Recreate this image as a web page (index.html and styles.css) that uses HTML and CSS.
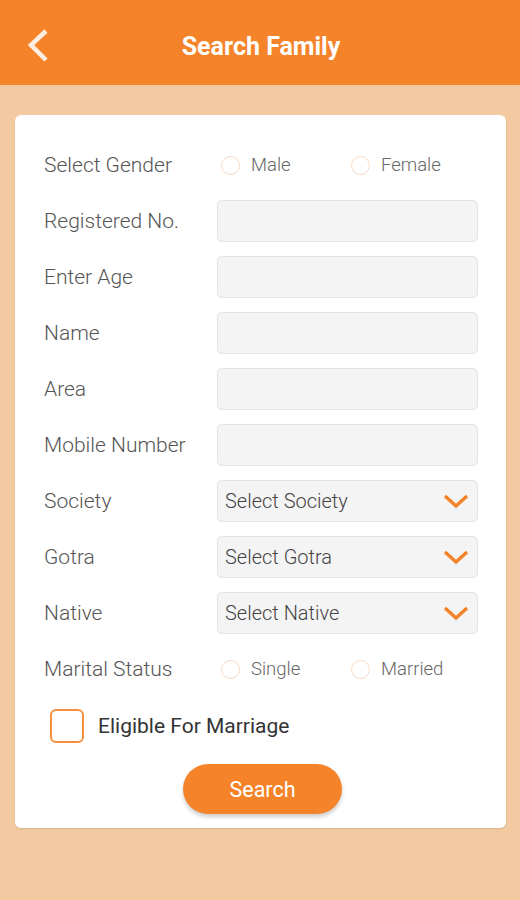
FILE: index.html
```html
<!DOCTYPE html>
<html lang="en">
<head>
    <meta charset="UTF-8">
    <meta name="viewport" content="width=device-width, initial-scale=1.0">
    <title>Search Family</title>
    <link rel="stylesheet" href="styles.css">
</head>

<body>
    <header class="topbar">
        <!-- Back button and title -->
        <span class="back">
            <svg width="24" height="36" viewBox="0 0 24 36">
                <polyline points="20,3 5,17 20,32" fill="none" stroke="#fdeee2" stroke-width="4.5"/>
            </svg>
        </span>
        <h1>Search Family</h1>
    </header>

    <main class="page">
        <form class="card">
            <div class="row">
                <label>Select Gender</label>
                <div class="radios">
                    <span class="radio"><i></i>Male</span>
                    <span class="radio"><i></i>Female</span>
                </div>
            </div>
            <div class="row">
                <label>Registered No.</label>
                <input type="text" class="field">
            </div>
            <div class="row">
                <label>Enter Age</label>
                <input type="text" class="field">
            </div>
            <div class="row">
                <label>Name</label>
                <input type="text" class="field">
            </div>
            <div class="row">
                <label>Area</label>
                <input type="text" class="field">
            </div>
            <div class="row">
                <label>Mobile Number</label>
                <input type="text" class="field">
            </div>
            <div class="row">
                <label>Society</label>
                <div class="field select">Select Society
                    <svg width="28" height="16" viewBox="0 0 28 16"><polyline points="3,3 14,13 25,3" fill="none" stroke="#f5832a" stroke-width="3.5"/></svg>
                </div>
            </div>
            <div class="row">
                <label>Gotra</label>
                <div class="field select">Select Gotra
                    <svg width="28" height="16" viewBox="0 0 28 16"><polyline points="3,3 14,13 25,3" fill="none" stroke="#f5832a" stroke-width="3.5"/></svg>
                </div>
            </div>
            <div class="row">
                <label>Native</label>
                <div class="field select">Select Native
                    <svg width="28" height="16" viewBox="0 0 28 16"><polyline points="3,3 14,13 25,3" fill="none" stroke="#f5832a" stroke-width="3.5"/></svg>
                </div>
            </div>
            <div class="row">
                <label>Marital Status</label>
                <div class="radios">
                    <span class="radio"><i></i>Single</span>
                    <span class="radio"><i></i>Married</span>
                </div>
            </div>

            <div class="check">
                <span class="box"></span>
                Eligible For Marriage
            </div>

            <div class="actions">
                <button type="button" class="btn">Search</button>
            </div>
        </form>
    </main>
</body>
</html>
```

FILE: styles.css
```css
body {
    margin: 0;
    padding: 0;
    background-color: #f2c9a0;
    font-family: Roboto, "Liberation Sans", sans-serif;
    height: 900px;
}

.topbar {
    background-color: #f5832a;
    height: 85px;
    display: flex;
    align-items: center;
    justify-content: center;
    position: relative;
}

.back {
    position: absolute;
    left: 26px;
    top: 28px;
}

.topbar h1 {
    margin: 0;
    color: #fff;
    font-size: 25px;
    font-weight: 700;
    margin-top: 8px;
    margin-left: 2px;
}

.page {
    padding: 30px 14px 0 15px;
}

.card {
    background-color: #fff;
    border-radius: 6px;
    padding: 29px 28px 14px 29px;
    box-shadow: 0 1px 2px rgba(0, 0, 0, 0.12);
}

.row {
    display: grid;
    grid-template-columns: 173px 261px;
    align-items: center;
    height: 42px;
    margin-bottom: 14px;
}

.row label {
    color: #555;
    font-size: 21px;
    font-weight: 300;
}

.field {
    box-sizing: border-box;
    height: 42px;
    width: 261px;
    border: 1px solid #e2e2e2;
    border-radius: 5px;
    background-color: #f4f4f4;
    margin: 0;
    font-family: inherit;
}

.select {
    display: flex;
    align-items: center;
    justify-content: space-between;
    padding: 0 7px 0 7px;
    color: #444;
    font-size: 20px;
    font-weight: 300;
}

.radios {
    display: flex;
    align-items: center;
}

.radio {
    display: flex;
    align-items: center;
    width: 130px;
    color: #666;
    font-size: 18.5px;
    font-weight: 300;
}

.radio i {
    display: inline-block;
    width: 17px;
    height: 17px;
    border: 1px solid #fbd9c2;
    border-radius: 50%;
    margin-left: 4px;
    margin-right: 11px;
}

.check {
    display: flex;
    align-items: center;
    color: #333;
    font-size: 21px;
    margin: 19px 0 0 6px;
    height: 34px;
}

.box {
    box-sizing: border-box;
    width: 34px;
    height: 34px;
    border: 2px solid #f5903f;
    border-radius: 6px;
    margin-right: 14px;
}

.actions {
    display: flex;
    justify-content: center;
    margin-top: 21px;
}

.btn {
    width: 159px;
    height: 50px;
    border: none;
    border-radius: 25px;
    background-color: #f5832a;
    color: #fff;
    font-family: inherit;
    font-size: 21.5px;
    box-shadow: 0 3px 4px rgba(0, 0, 0, 0.2);
    margin-left: 3px;
}
```
